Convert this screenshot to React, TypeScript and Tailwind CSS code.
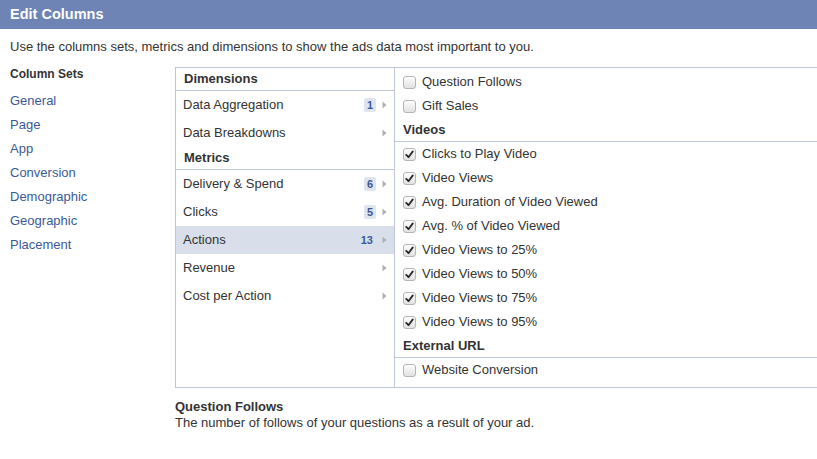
import React from 'react';

type MenuItem = { label: string; count?: number; active?: boolean };
type Group = { title: string; items: MenuItem[] };

const columnSets = ['General', 'Page', 'App', 'Conversion', 'Demographic', 'Geographic', 'Placement'];

const groups: Group[] = [
  {
    title: 'Dimensions',
    items: [{ label: 'Data Aggregation', count: 1 }, { label: 'Data Breakdowns' }],
  },
  {
    title: 'Metrics',
    items: [
      { label: 'Delivery & Spend', count: 6 },
      { label: 'Clicks', count: 5 },
      { label: 'Actions', count: 13, active: true },
      { label: 'Revenue' },
      { label: 'Cost per Action' },
    ],
  },
];

type Field = { type: 'field'; label: string; checked: boolean } | { type: 'header'; label: string };

const fields: Field[] = [
  { type: 'field', label: 'Question Follows', checked: false },
  { type: 'field', label: 'Gift Sales', checked: false },
  { type: 'header', label: 'Videos' },
  { type: 'field', label: 'Clicks to Play Video', checked: true },
  { type: 'field', label: 'Video Views', checked: true },
  { type: 'field', label: 'Avg. Duration of Video Viewed', checked: true },
  { type: 'field', label: 'Avg. % of Video Viewed', checked: true },
  { type: 'field', label: 'Video Views to 25%', checked: true },
  { type: 'field', label: 'Video Views to 50%', checked: true },
  { type: 'field', label: 'Video Views to 75%', checked: true },
  { type: 'field', label: 'Video Views to 95%', checked: true },
  { type: 'header', label: 'External URL' },
  { type: 'field', label: 'Website Conversion', checked: false },
];

const Checkbox: React.FC<{ checked: boolean }> = ({ checked }) => (
  <span className="flex h-[13px] w-[13px] items-center justify-center rounded-[3px] border border-[#b5b5b5] bg-gradient-to-b from-[#fdfdfd] to-[#e2e2e2]">
    {checked && (
      <svg width="9" height="9" viewBox="0 0 9 9">
        <path d="M1.2 4.8 L3.5 7.2 L7.8 1.4" fill="none" stroke="#2a2a2a" strokeWidth="1.8" strokeLinecap="round" strokeLinejoin="round" />
      </svg>
    )}
  </span>
);

const Arrow = () => (
  <svg width="5" height="8" viewBox="0 0 5 8" className="ml-[6px]">
    <path d="M0.5 0.5 L4.5 4 L0.5 7.5 Z" fill="#b0b0b0" />
  </svg>
);

export default function App() {
  return (
    <div className="h-[459px] w-[817px] overflow-hidden bg-white font-['Liberation_Sans',Arial,sans-serif] text-[#333]">
      <div className="flex h-[29px] items-center bg-[#6d84b4] px-[10px] text-[14.5px] font-bold text-white">
        Edit Columns
      </div>
      <p className="px-[10px] pt-[10px] text-[13px] leading-[16px]">
        Use the columns sets, metrics and dimensions to show the ads data most important to you.
      </p>

      <div className="mt-[10px] flex">
        <div className="w-[175px] shrink-0 pl-[10px] pt-[1px]">
          <div className="h-[16px] text-[12px] font-bold leading-[16px]">Column Sets</div>
          <ul className="mt-[7px]">
            {columnSets.map((s) => (
              <li key={s} className="h-6 text-[13px] leading-6 text-[#3b5998]">
                {s}
              </li>
            ))}
          </ul>
        </div>

        <div className="mt-[2px] flex h-[321px] flex-1 border-y border-l border-[#bdc7d8]">
          <div className="w-[219px] shrink-0 border-r border-[#bdc7d8]">
            {groups.map((g) => (
              <div key={g.title}>
                <div className="flex h-[23px] items-center border-b border-[#bdc7d8] pl-[8px] text-[13px] font-bold">
                  {g.title}
                </div>
                {g.items.map((it) => (
                  <div
                    key={it.label}
                    className={`flex h-[28px] items-center pl-[7px] pr-[7px] text-[13px] ${it.active ? 'bg-[#d8dfea]' : ''}`}
                  >
                    <span className="flex-1">{it.label}</span>
                    {it.count !== undefined && (
                      <span
                        className={`flex h-[14px] items-center rounded-[2px] px-[3px] text-[11px] font-bold text-[#3b5998] ${it.active ? '' : 'bg-[#dfe4ee]'}`}
                      >
                        {it.count}
                      </span>
                    )}
                    <Arrow />
                  </div>
                ))}
              </div>
            ))}
          </div>

          <div className="flex-1 pt-[2px]">
            {fields.map((f) =>
              f.type === 'header' ? (
                <div
                  key={f.label}
                  className="flex h-[24px] items-center border-b border-[#bdc7d8] pl-[8px] text-[13px] font-bold"
                >
                  {f.label}
                </div>
              ) : (
                <div key={f.label} className="flex h-6 items-center pl-[8px] text-[13px]">
                  <Checkbox checked={f.checked} />
                  <span className="ml-[6px]">{f.label}</span>
                </div>
              ),
            )}
          </div>
        </div>
      </div>

      <div className="mt-[11px] pl-[175px]">
        <div className="text-[13px] font-bold leading-[16px]">Question Follows</div>
        <div className="text-[13px] leading-[16px]">The number of follows of your questions as a result of your ad.</div>
      </div>
    </div>
  );
}
